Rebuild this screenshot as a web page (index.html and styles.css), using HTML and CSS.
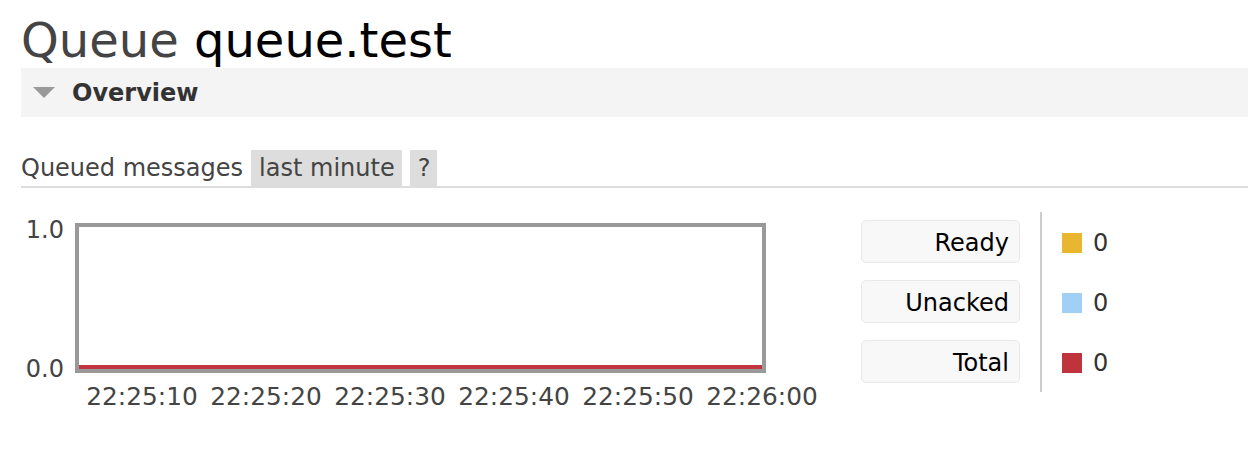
FILE: index.html
```html
<!DOCTYPE html>
<html lang="en">

<head>
    <meta charset="UTF-8">
    <meta name="viewport" content="width=device-width, initial-scale=1.0">
    <title>Queue queue.test</title>
    <link rel="stylesheet" href="styles.css">
</head>

<body>
    <main>
        <h1>Queue <b>queue.test</b></h1>

        <div class="section-head">
            <span class="arrow"></span>
            <h2>Overview</h2>
        </div>

        <div class="tabs">
            <span class="tabs-title">Queued messages</span>
            <span class="tab">last minute</span>
            <span class="tab">?</span>
        </div>

        <div class="chart-row">
            <div class="chart">
                <div class="y-axis">
                    <span>1.0</span>
                    <span>0.0</span>
                </div>
                <div class="plot">
                    <div class="series-total"></div>
                </div>
                <div class="x-axis">
                    <span>22:25:10</span>
                    <span>22:25:20</span>
                    <span>22:25:30</span>
                    <span>22:25:40</span>
                    <span>22:25:50</span>
                    <span>22:26:00</span>
                </div>
            </div>

            <div class="legend">
                <div class="legend-labels">
                    <div class="legend-label">Ready</div>
                    <div class="legend-label">Unacked</div>
                    <div class="legend-label">Total</div>
                </div>
                <div class="legend-values">
                    <div class="legend-value"><span class="swatch ready"></span>0</div>
                    <div class="legend-value"><span class="swatch unacked"></span>0</div>
                    <div class="legend-value"><span class="swatch total"></span>0</div>
                </div>
            </div>
        </div>
    </main>
</body>

</html>
```

FILE: styles.css
```css
* {
    padding: 0;
    margin: 0;
    box-sizing: border-box;
}

body {
    background-color: white;
    font-family: "DejaVu Sans", Verdana, sans-serif;
    font-size: 24px;
    color: #444;
}

main {
    padding-left: 21px;
}

h1 {
    margin-top: 12px;
    font-size: 48px;
    font-weight: normal;
    line-height: 56px;
    color: #444;
}

h1 b {
    font-weight: normal;
    color: black;
}

.section-head {
    display: flex;
    align-items: center;
    height: 49px;
    background-color: #f4f4f4;
}

.arrow {
    width: 0;
    height: 0;
    margin-left: 12px;
    margin-right: 17px;
    border-left: 11px solid transparent;
    border-right: 11px solid transparent;
    border-top: 11px solid #999;
}

h2 {
    font-size: 24px;
    font-weight: bold;
    color: #333;
}

.tabs {
    display: flex;
    margin-top: 33px;
    line-height: 36px;
    border-bottom: 2px solid #ddd;
}

.tabs-title {
    margin-right: 8px;
}

.tab {
    padding: 0 7px 0 8px;
    margin-right: 8px;
    background-color: #ddd;
}

.chart-row {
    display: flex;
    align-items: flex-start;
    margin-top: 24px;
}

.chart {
    display: grid;
    grid-template-columns: 54px 691px;
    grid-template-rows: 150px auto;
    width: 802px;
    padding-top: 11px;
}

.y-axis {
    display: flex;
    flex-direction: column;
    justify-content: space-between;
    align-items: flex-end;
    margin: -7px 0 -10px;
    padding-right: 11px;
    line-height: 28px;
}

.plot {
    position: relative;
    border: 4px solid #999;
}

.series-total {
    position: absolute;
    left: 0;
    right: 0;
    bottom: 0;
    height: 4px;
    background-color: #c0353f;
}

.x-axis {
    grid-column: 1 / 3;
    display: flex;
    margin-top: 10px;
    padding-left: 59px;
    font-size: 24.8px;
    line-height: 28px;
}

.x-axis span {
    flex: none;
    width: 124px;
    text-align: center;
}

.legend {
    display: flex;
    margin-left: 38px;
    height: 180px;
}

.legend-labels {
    display: flex;
    flex-direction: column;
    gap: 17px;
    padding: 8px 20px 0 0;
    border-right: 2px solid #ccc;
}

.legend-label {
    width: 159px;
    height: 43px;
    padding: 2px 10px 0 0;
    line-height: 41px;
    text-align: right;
    color: black;
    background-color: #f8f8f8;
    border: 1px solid #e8e8e8;
    border-radius: 5px;
}

.legend-values {
    display: flex;
    flex-direction: column;
    gap: 17px;
    padding: 9px 0 0 20px;
}

.legend-value {
    display: flex;
    align-items: center;
    gap: 11px;
    height: 43px;
    color: #333;
}

.swatch {
    width: 20px;
    height: 20px;
}

.swatch.ready {
    background-color: #e9b630;
}

.swatch.unacked {
    background-color: #a0d0f4;
}

.swatch.total {
    background-color: #bf333c;
}
```
